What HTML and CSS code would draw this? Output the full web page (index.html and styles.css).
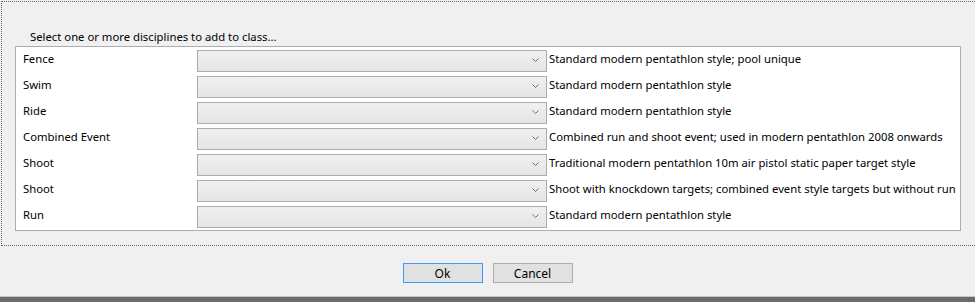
FILE: index.html
```html
<!DOCTYPE html>
<html lang="en">

<head>
    <meta charset="UTF-8">
    <title>Add Disciplines</title>
    <link rel="stylesheet" href="styles.css">
</head>

<body>
    <div class="dialog">
        <section class="panel">
            <div class="caption">Select one or more disciplines to add to class...</div>

            <div class="listbox">
                <div class="row">
                    <div class="row-label">Fence</div>
                    <div class="combo"><svg class="chevron" viewBox="0 0 7 4"><polyline points="0.5,0.5 3.5,3.5 6.5,0.5" /></svg></div>
                    <div class="row-desc">Standard modern pentathlon style; pool unique</div>
                </div>
                <div class="row">
                    <div class="row-label">Swim</div>
                    <div class="combo"><svg class="chevron" viewBox="0 0 7 4"><polyline points="0.5,0.5 3.5,3.5 6.5,0.5" /></svg></div>
                    <div class="row-desc">Standard modern pentathlon style</div>
                </div>
                <div class="row">
                    <div class="row-label">Ride</div>
                    <div class="combo"><svg class="chevron" viewBox="0 0 7 4"><polyline points="0.5,0.5 3.5,3.5 6.5,0.5" /></svg></div>
                    <div class="row-desc">Standard modern pentathlon style</div>
                </div>
                <div class="row">
                    <div class="row-label">Combined Event</div>
                    <div class="combo"><svg class="chevron" viewBox="0 0 7 4"><polyline points="0.5,0.5 3.5,3.5 6.5,0.5" /></svg></div>
                    <div class="row-desc">Combined run and shoot event; used in modern pentathlon 2008 onwards</div>
                </div>
                <div class="row">
                    <div class="row-label">Shoot</div>
                    <div class="combo"><svg class="chevron" viewBox="0 0 7 4"><polyline points="0.5,0.5 3.5,3.5 6.5,0.5" /></svg></div>
                    <div class="row-desc">Traditional modern pentathlon 10m air pistol static paper target style</div>
                </div>
                <div class="row">
                    <div class="row-label">Shoot</div>
                    <div class="combo"><svg class="chevron" viewBox="0 0 7 4"><polyline points="0.5,0.5 3.5,3.5 6.5,0.5" /></svg></div>
                    <div class="row-desc">Shoot with knockdown targets; combined event style targets but without run</div>
                </div>
                <div class="row">
                    <div class="row-label">Run</div>
                    <div class="combo"><svg class="chevron" viewBox="0 0 7 4"><polyline points="0.5,0.5 3.5,3.5 6.5,0.5" /></svg></div>
                    <div class="row-desc">Standard modern pentathlon style</div>
                </div>
            </div>
        </section>

        <footer class="buttons">
            <button class="btn btn-default">Ok</button>
            <button class="btn">Cancel</button>
        </footer>
    </div>
</body>

</html>
```

FILE: styles.css
```css
* {
    margin: 0;
    padding: 0;
    box-sizing: border-box;
}

html,
body {
    height: 100%;
}

body {
    font-family: "Noto Sans", "Liberation Sans", sans-serif;
    font-size: 11.3px;
    color: #000000;
    background: #f0f0f0;
    overflow: hidden;
}

.dialog {
    display: flex;
    flex-direction: column;
    height: 302px;
    border-bottom: 5px solid #6b6b6b;
    box-shadow: inset 0 -1px 0 #c8c8c8;
}

.panel {
    margin: 1px -10px 0 1px;
    height: 245px;
    border: 1px dotted #646464;
    padding: 22px 0 0 13px;
}

.caption {
    padding-left: 15px;
    line-height: 16px;
    height: 22px;
    padding-top: 5px;
}

.listbox {
    width: 946px;
    height: 185px;
    background: #ffffff;
    border: 1px solid #abadb3;
    padding: 3px 0 2px;
    display: flex;
    flex-direction: column;
    gap: 4px;
}

.row {
    display: flex;
    align-items: flex-start;
    height: 22px;
}

.row-label {
    flex-shrink: 0;
    width: 181px;
    padding-left: 7px;
    padding-top: 1px;
    line-height: 16px;
}

.row-desc {
    padding-left: 2px;
    padding-top: 1px;
    line-height: 16px;
    white-space: nowrap;
}

.combo {
    flex-shrink: 0;
    position: relative;
    width: 350px;
    height: 22px;
    border: 1px solid #acacac;
    background: linear-gradient(#f0f0f0, #e5e5e5);
}

.chevron {
    position: absolute;
    right: 7px;
    top: 7px;
    width: 7px;
    height: 4px;
    fill: none;
    stroke: #6d6d6d;
    stroke-width: 1;
}

.buttons {
    display: flex;
    justify-content: center;
    gap: 10px;
    padding-top: 17px;
}

.btn {
    width: 80px;
    height: 20px;
    font-family: inherit;
    font-size: 12px;
    color: #000000;
    background: #e1e1e1;
    border: 1px solid #adadad;
}

.btn-default {
    border-color: #3c9cfc;
}
```
